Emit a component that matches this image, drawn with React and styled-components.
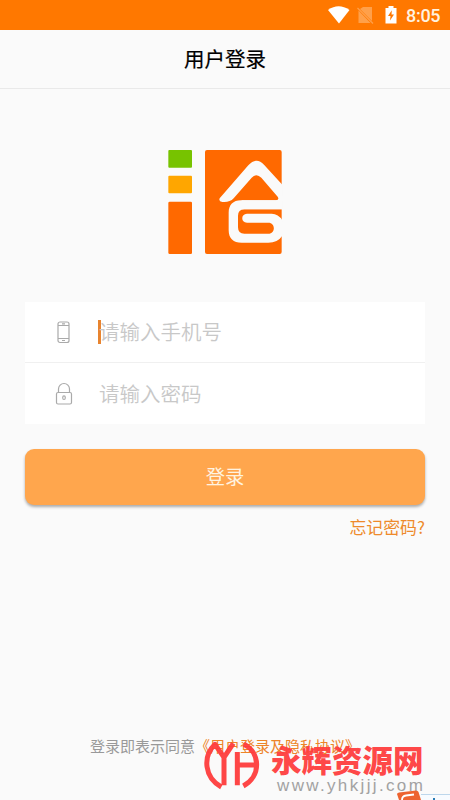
import React from "react";
import styled, { createGlobalStyle } from "styled-components";

const GlobalStyle = createGlobalStyle`
  * { box-sizing: border-box; }
  body { margin: 0; background: #fafafa; font-family: "Noto Sans CJK SC", sans-serif; }
`;

const Screen = styled.div`
  position: relative;
  width: 450px;
  height: 800px;
  overflow: hidden;
  display: flex;
  flex-direction: column;
  background: #fafafa;
`;

const StatusBar = styled.header`
  height: 30px;
  flex: none;
  display: flex;
  justify-content: flex-end;
  background: #ff7800;
`;

const StatusIcons = styled.svg`
  width: 77px;
  height: 30px;
`;

const Clock = styled.span`
  width: 45px;
  padding-left: 1px;
  font: 500 18px/32px Roboto, sans-serif;
  letter-spacing: -0.3px;
  color: #fff3e0;
`;

const TitleBar = styled.h1`
  height: 59px;
  flex: none;
  margin: 0;
  border-bottom: 1px solid #e9e9e9;
  font-size: 20.5px;
  font-weight: 400;
  line-height: 57px;
  text-align: center;
  color: #000;
  -webkit-text-stroke: 0.2px #000;
`;

const Content = styled.main`
  flex: 1;
  display: flex;
  flex-direction: column;
  padding: 51px 25px 0;
`;

const Logo = styled.svg`
  width: 140px;
  height: 125px;
  flex: none;
  align-self: center;
`;

const Fields = styled.div`
  margin-top: 37px;
  background: #fff;
`;

const Field = styled.label`
  height: 61px;
  display: flex;
  align-items: center;
  padding-left: 25px;
  border-bottom: ${(p) => (p.$divided ? "1px solid #f0f0f0" : "0")};
`;

const FieldIcon = styled.svg`
  width: 28px;
  height: 28px;
  fill: none;
  stroke: #aaa;
  stroke-width: 1.2;
`;

const Caret = styled.i`
  width: 3px;
  height: 24px;
  margin: 0 -3px 0 20px;
  background: ${(p) => (p.$active ? "#e8842f" : "transparent")};
`;

const Placeholder = styled.span`
  margin-left: 1px;
  padding-bottom: 2px;
  font-size: 20.5px;
  line-height: 30px;
  font-weight: 350;
  color: #c8c8c8;
`;

const LoginButton = styled.button`
  height: 56px;
  flex: none;
  margin-top: 25px;
  padding: 0 0 1px;
  border: 0;
  border-radius: 9px;
  background: #ffa64d;
  box-shadow: 0 2px 3px rgba(0, 0, 0, 0.32);
  color: #fff3e0;
  font: 400 19.3px/55px "Noto Sans CJK SC", sans-serif;
`;

const Forgot = styled.a`
  align-self: flex-end;
  margin-top: 9px;
  font-size: 16.9px;
  line-height: 25px;
  color: #ee8a2b;
`;

const Agreement = styled.p`
  margin: auto 0 42px;
  padding-left: 65px;
  font-size: 15px;
  line-height: 24px;
  white-space: nowrap;
  color: #999;
`;

const Terms = styled.span`
  color: #ed8428;
`;

const Watermark = styled.aside`
  position: absolute;
  left: 204px;
  top: 739px;
  display: flex;
`;

const Emblem = styled.svg`
  width: 60px;
  height: 52px;
  flex: none;
  fill: none;
  stroke: #ff3d3d;
  stroke-width: 15;
  stroke-linejoin: round;
  opacity: 0.95;
`;

const WatermarkText = styled.div`
  padding-left: 7px;
`;

const SiteName = styled.div`
  height: 37px;
  font-size: 30.5px;
  line-height: 41px;
  font-weight: 900;
  white-space: nowrap;
  color: rgba(255, 61, 61, 0.95);
`;

const SiteUrl = styled.div`
  padding-left: 6px;
  font: 17px/19px "Liberation Sans", sans-serif;
  letter-spacing: 2.35px;
  white-space: nowrap;
  color: #a2a2a2;
`;

const CornerBadge = styled.svg`
  position: absolute;
  right: 0;
  bottom: 0;
  width: 60px;
  height: 11px;
`;

export default function App() {
  return (
    <>
      <GlobalStyle />
      <Screen>
        <StatusBar>
          <StatusIcons viewBox="328 0 77 30" fill="#fff">
            <path d="M328 10Q338.500 2.500 349.500 10L339 23.500Z" />
            <path d="M363 7H372V21L360 9ZM358.500 10.500L370.500 23H358.500Z" fill="#ffa04a" />
            <path d="M357.500 8L373 23.500" stroke="#ffa04a" strokeWidth="1.300" />
            <path d="M388.500 6H393.500V8H396.500V23.500H385.500V8H388.500Z" />
            <path d="M391.800 10.200L388 16H390.500L390 20.500L394 14.500H391.500Z" fill="#ff7800" />
          </StatusIcons>
          <Clock>8:05</Clock>
        </StatusBar>
        <TitleBar>用户登录</TitleBar>
        <Content>
          <Logo viewBox="0 0 420 375">
            <rect x="40" y="30" width="71" height="53" rx="3" fill="#77c300" />
            <rect x="40" y="107" width="71" height="53" rx="3" fill="#ffa600" />
            <rect x="40" y="185" width="71" height="157" rx="4" fill="#ff6900" />
            <rect x="150" y="30" width="230" height="312" rx="6" fill="#ff6900" />
            <g fill="#fafafa">
              <path d="M194 175L280 76Q304 49 327 74L382 134V208H260V181H363Q374 179 368 170L319 113Q304 98 290 113L236 175Q224 188 202 186Q190 184 194 175Z" />
              <path
                fillRule="evenodd"
                d="M382 181H258C234 181 221 195 221 218V270C221 296 235 308 260 308H340Q368 308 382 287ZM382 208H268Q249 208 249 228V262Q249 281 268 281H340C362 281 362 248 340 248H276C257 248 257 221 276 221H350Q370 221 382 241Z"
              />
            </g>
          </Logo>
          <Fields>
            <Field $divided>
              <FieldIcon viewBox="0 0 28 28">
                <rect x="8" y="4" width="11" height="20.500" rx="2" />
                <path d="M8 7.500H19M8 20.500H19M12 5.800H15M12 22.500H15" />
              </FieldIcon>
              <Caret $active />
              <Placeholder>请输入手机号</Placeholder>
            </Field>
            <Field>
              <FieldIcon viewBox="0 0 28 28">
                <rect x="6.500" y="12.500" width="15" height="11.500" rx="1.500" />
                <path d="M8.500 12.500V9A5.500 5.500 0 0 1 19.500 9V12.500" />
                <ellipse cx="14" cy="17.700" rx="1.300" ry="1.800" />
              </FieldIcon>
              <Caret />
              <Placeholder>请输入密码</Placeholder>
            </Field>
          </Fields>
          <LoginButton>登录</LoginButton>
          <Forgot>忘记密码?</Forgot>
          <Agreement>
            登录即表示同意<Terms>《用户登录及隐私协议》</Terms>
          </Agreement>
        </Content>
        <Watermark>
          <Emblem viewBox="27 27 180 156">
            <path d="M79 171C28 143 22 80 60 43L87 82L115 40M87 80V166" />
            <path d="M146 42C197 68 199 139 145 168M127 66V166M127 105H182" />
          </Emblem>
          <WatermarkText>
            <SiteName>永辉资源网</SiteName>
            <SiteUrl>www.yhkjjj.com</SiteUrl>
          </WatermarkText>
        </Watermark>
        <CornerBadge viewBox="390 789 60 11">
          <path d="M421 794.500H450V800H421Z" fill="#f7fbff" />
          <path d="M421 794.500H450" stroke="#bdd7ec" />
          <path d="M397 794Q397 793 399 792.500L416 790.500Q418 790.500 418.500 792L421 800H399Z" fill="#ed6330" />
          <path d="M402 800Q402 796 406 795.500L414 794.500" fill="none" stroke="#fff" strokeWidth="1.800" />
          <path d="M434 798V800" stroke="#287bb5" strokeWidth="2" />
        </CornerBadge>
      </Screen>
    </>
  );
}
